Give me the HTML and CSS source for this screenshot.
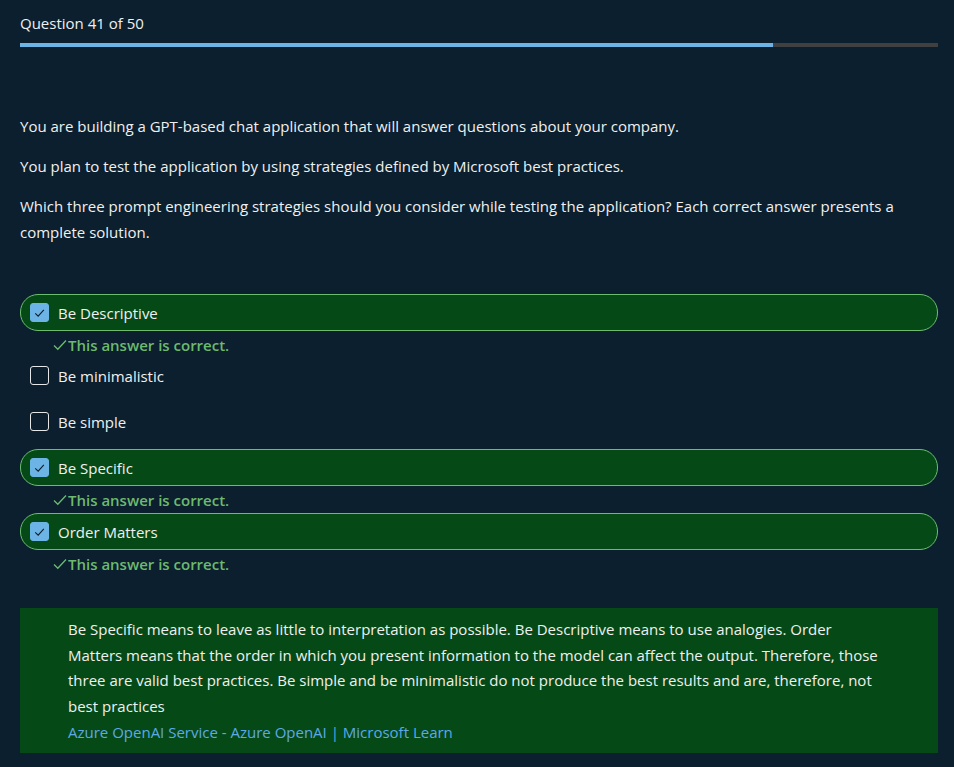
FILE: index.html
```html
<!DOCTYPE html>
<html lang="en">
<head>
<meta charset="utf-8">
<title>Question 41 of 50</title>
<link rel="stylesheet" href="styles.css">
</head>
<body>
<main class="quiz">
  <header class="quiz-header">
    <div class="quiz-count">Question 41 of 50</div>
    <div class="progress"><div class="progress-fill" style="width: 82%"></div></div>
  </header>

  <section class="question">
    <p>You are building a GPT-based chat application that will answer questions about your company.</p>
    <p>You plan to test the application by using strategies defined by Microsoft best practices.</p>
    <p>Which three prompt engineering strategies should you consider while testing the application? Each correct answer presents a complete solution.</p>
  </section>

  <ul class="options">
    <li class="option-item correct">
      <div class="option selected">
        <span class="checkbox checked"><svg viewBox="0 0 18 18" width="18" height="18"><path d="M4.5 9.3 L7.6 12.3 L13.6 5.8" fill="none" stroke="#0b1f2e" stroke-width="1.2"/></svg></span>
        <span class="label">Be Descriptive</span>
      </div>
      <div class="feedback"><svg viewBox="0 0 14 12" width="14" height="12"><path d="M1 6.5 L4.8 10.3 L13 1.5" fill="none" stroke="#6dba6f" stroke-width="1.3"/></svg>This answer is correct.</div>
    </li>
    <li class="option-item">
      <div class="option">
        <span class="checkbox"></span>
        <span class="label">Be minimalistic</span>
      </div>
    </li>
    <li class="option-item">
      <div class="option">
        <span class="checkbox"></span>
        <span class="label">Be simple</span>
      </div>
    </li>
    <li class="option-item correct">
      <div class="option selected">
        <span class="checkbox checked"><svg viewBox="0 0 18 18" width="18" height="18"><path d="M4.5 9.3 L7.6 12.3 L13.6 5.8" fill="none" stroke="#0b1f2e" stroke-width="1.2"/></svg></span>
        <span class="label">Be Specific</span>
      </div>
      <div class="feedback"><svg viewBox="0 0 14 12" width="14" height="12"><path d="M1 6.5 L4.8 10.3 L13 1.5" fill="none" stroke="#6dba6f" stroke-width="1.3"/></svg>This answer is correct.</div>
    </li>
    <li class="option-item correct">
      <div class="option selected">
        <span class="checkbox checked"><svg viewBox="0 0 18 18" width="18" height="18"><path d="M4.5 9.3 L7.6 12.3 L13.6 5.8" fill="none" stroke="#0b1f2e" stroke-width="1.2"/></svg></span>
        <span class="label">Order Matters</span>
      </div>
      <div class="feedback"><svg viewBox="0 0 14 12" width="14" height="12"><path d="M1 6.5 L4.8 10.3 L13 1.5" fill="none" stroke="#6dba6f" stroke-width="1.3"/></svg>This answer is correct.</div>
    </li>
  </ul>

  <section class="explanation">
    <p>Be Specific means to leave as little to interpretation as possible. Be Descriptive means to use analogies. Order Matters means that the order in which you present information to the model can affect the output. Therefore, those three are valid best practices. Be simple and be minimalistic do not produce the best results and are, therefore, not best practices</p>
    <a class="ref-link" href="#">Azure OpenAI Service - Azure OpenAI | Microsoft Learn</a>
  </section>
</main>
</body>
</html>
```

FILE: styles.css
```css
* { box-sizing: border-box; }

html, body {
  margin: 0;
  padding: 0;
  background: #0b1f2e;
}

body {
  font-family: "Open Sans", "Noto Sans", sans-serif;
  font-size: 15px;
  color: #f0f0f0;
}

.quiz {
  padding: 12px 16px 0 20px;
}

.quiz-count {
  line-height: 22px;
  height: 22px;
}

.progress {
  margin-top: 9px;
  height: 4px;
  background: #404040;
}

.progress-fill {
  height: 100%;
  background: #6cb4e6;
}

.question {
  padding-top: 66px;
}

.question p {
  margin: 0 0 14px 0;
  line-height: 26px;
}

.question p:last-child {
  margin-bottom: 0;
}

.options {
  list-style: none;
  margin: 49px 0 0 0;
  padding: 0;
}

.option-item {
  margin-bottom: 9px;
}

.option-item.correct {
  margin-bottom: 0;
}

.option {
  display: flex;
  align-items: center;
  gap: 9px;
  height: 37px;
  padding: 0 9px;
  border: 1px solid transparent;
  border-radius: 18px;
}

.option.selected {
  background: #054a16;
  border-color: #6cbc70;
}

.checkbox {
  width: 19px;
  height: 19px;
  flex: none;
  border: 1px solid #e6e6e6;
  border-radius: 3px;
  display: flex;
  align-items: center;
  justify-content: center;
}

.checkbox.checked {
  background: #6cb4e6;
  border-color: #6cb4e6;
}

.checkbox svg {
  display: block;
}

.label {
  line-height: 20px;
}

.feedback {
  display: flex;
  align-items: center;
  height: 27px;
  padding-left: 33px;
  color: #6dba6f;
  font-weight: 600;
}

.feedback svg {
  margin-right: 1px;
  margin-top: 1px;
}

.option-item.correct + .option-item:not(.correct) .option {
  margin-top: -1px;
}

.explanation {
  margin-top: 31px;
  background: #054a16;
  padding: 9px 60px 7px 48px;
}

.explanation p {
  margin: 0;
  line-height: 25.7px;
}

.ref-link {
  display: block;
  line-height: 25.7px;
  color: #5fa8e6;
  text-decoration: none;
}
```
